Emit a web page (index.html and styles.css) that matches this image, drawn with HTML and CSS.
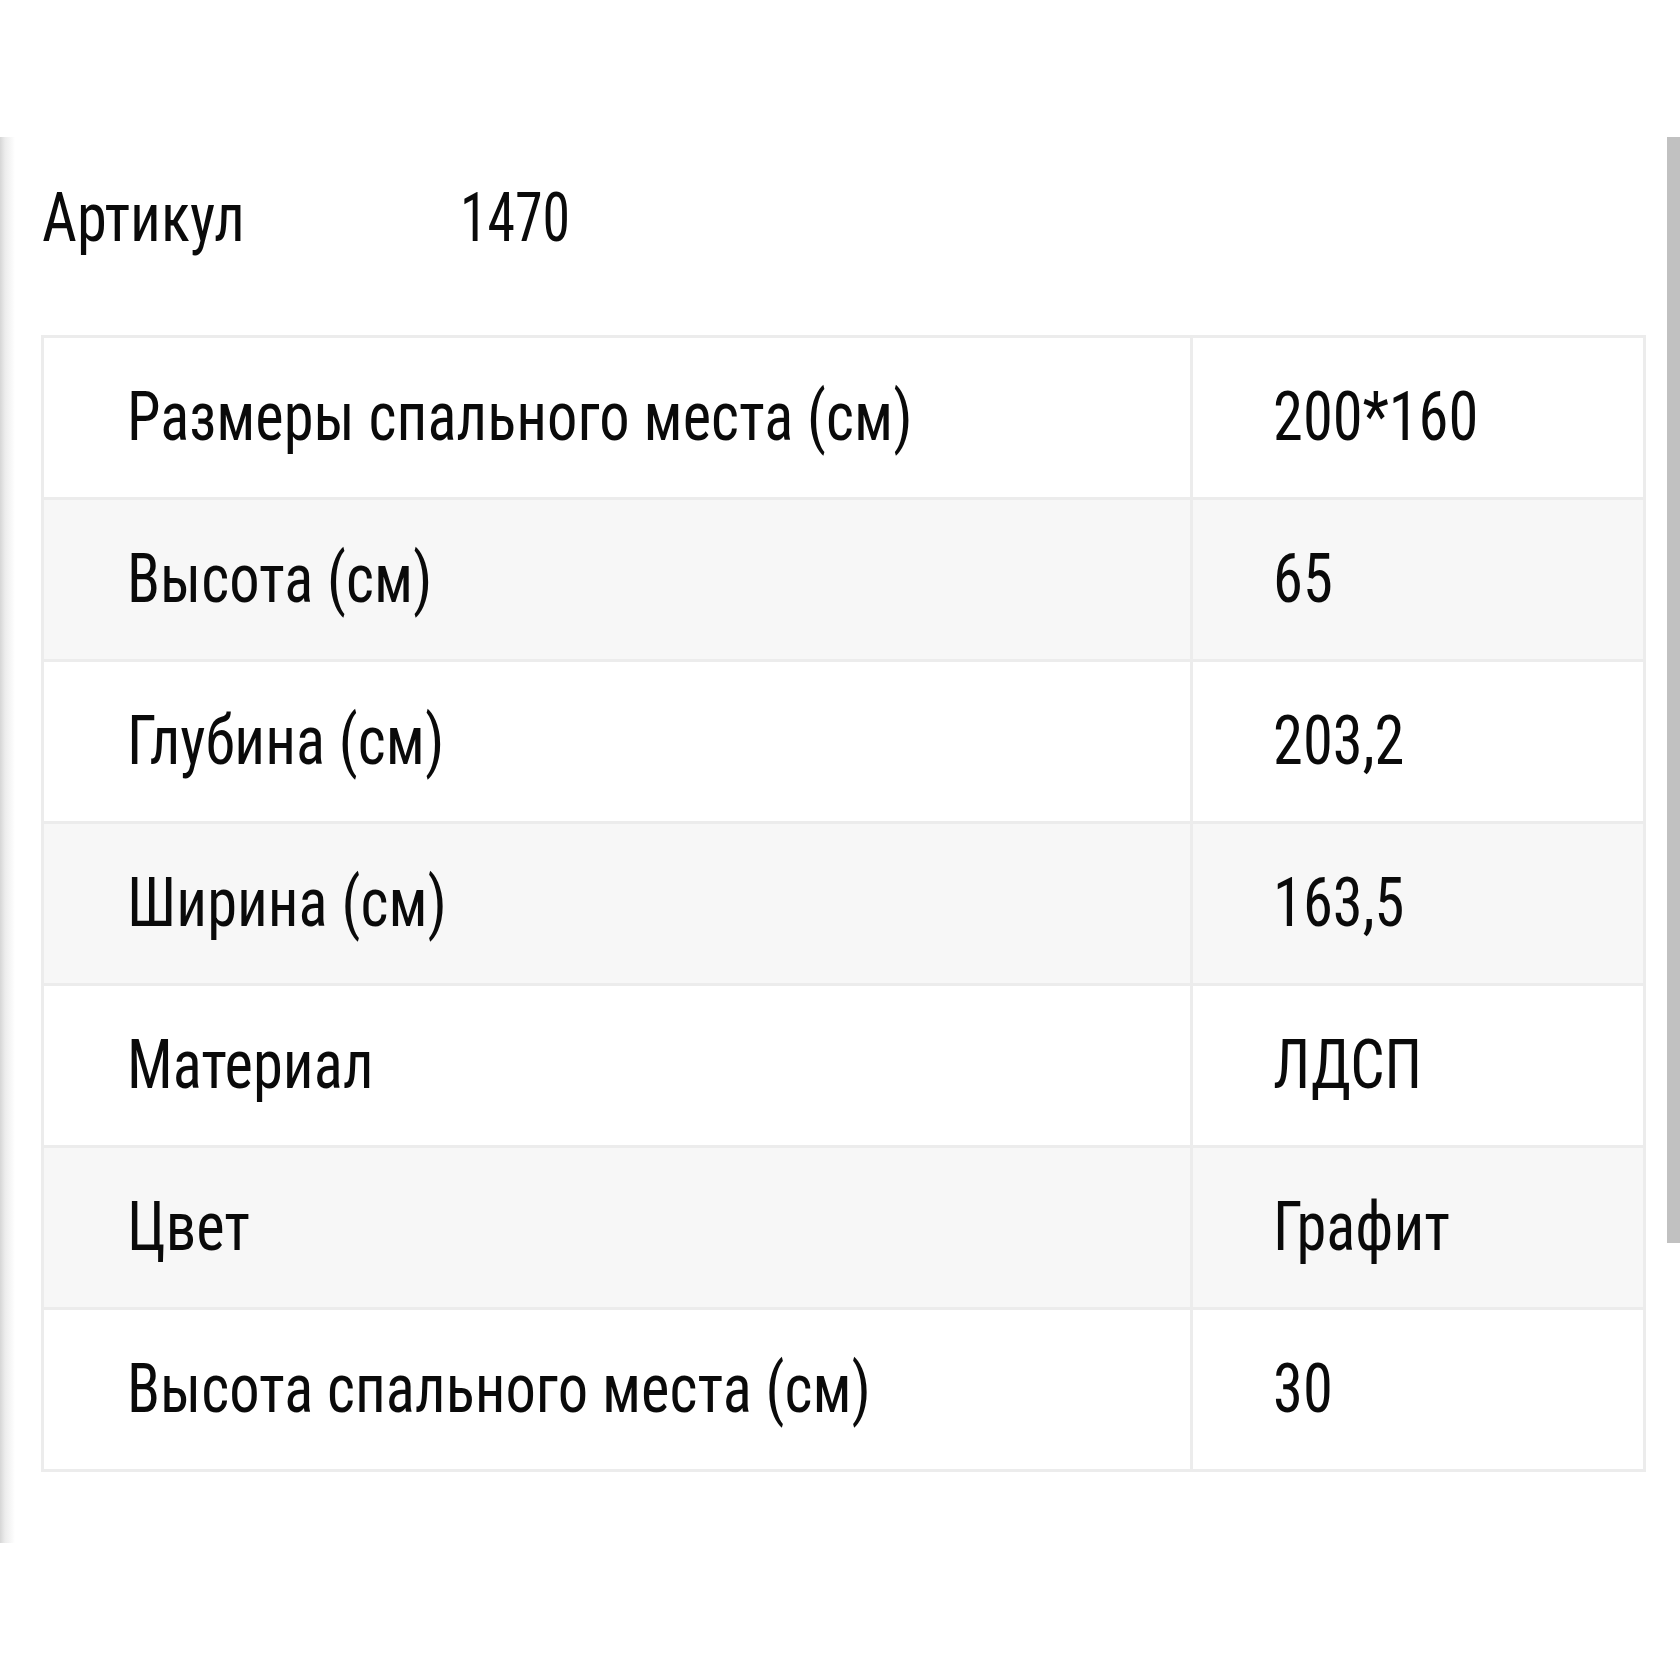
FILE: index.html
```html
<!DOCTYPE html>
<html lang="ru">
<head>
<meta charset="utf-8">
<title>Характеристики</title>
<link rel="stylesheet" href="styles.css">
</head>
<body>
<div class="page">
  <div class="sheet">
    <div class="sku">
      <span class="sku-label"><span class="t">Артикул</span></span>
      <span class="sku-value"><span class="t t-num">1470</span></span>
    </div>
    <table class="specs">
      <colgroup><col class="c-name"><col class="c-val"></colgroup>
      <tbody>
        <tr><td><span class="t">Размеры спального места (см)</span></td><td><span class="t">200*160</span></td></tr>
        <tr><td><span class="t">Высота (см)</span></td><td><span class="t">65</span></td></tr>
        <tr><td><span class="t">Глубина (см)</span></td><td><span class="t">203,2</span></td></tr>
        <tr><td><span class="t">Ширина (см)</span></td><td><span class="t">163,5</span></td></tr>
        <tr><td><span class="t">Материал</span></td><td><span class="t">ЛДСП</span></td></tr>
        <tr><td><span class="t">Цвет</span></td><td><span class="t">Графит</span></td></tr>
        <tr><td><span class="t">Высота спального места (см)</span></td><td><span class="t">30</span></td></tr>
      </tbody>
    </table>
    <div class="scrollbar"></div>
  </div>
</div>
</body>
</html>
```
FILE: styles.css
```css
html, body {
  margin: 0;
  padding: 0;
  background: #ffffff;
}
body {
  font-family: "Roboto Condensed", "Liberation Sans Narrow", "DejaVu Sans Condensed", "DejaVu Sans", sans-serif;
  font-stretch: condensed;
  color: #0a0a0a;
}
.t {
  display: inline-block;
  transform: scaleX(0.89);
  transform-origin: left center;
}
.t-num {
  transform: scaleX(0.82);
}
.page {
  padding-top: 137px;
  height: 1543px;
  box-sizing: border-box;
}
.sheet {
  position: relative;
  padding: 42px 0 71px 41px;
  width: 1643px;
  background: linear-gradient(to right, #d6d6d6 0, #ececec 5px, #ffffff 15px) no-repeat;
  background-size: 16px 100%;
}
.sku {
  display: flex;
  align-items: baseline;
  font-size: 68px;
  line-height: 78px;
  padding-left: 1px;
}
.sku-label {
  width: 418px;
}
.specs {
  margin-top: 78px;
  border-collapse: collapse;
  table-layout: fixed;
  width: 1602px;
  border: 3px solid #ececec;
  font-size: 68px;
  line-height: 79px;
}
.c-name { width: 1149px; }
.c-val { width: 453px; }
.specs td {
  border: 3px solid #ececec;
  padding: 40px 20px 40px 83px;
  vertical-align: middle;
  white-space: nowrap;
}
.specs td + td {
  padding-left: 80px;
}
.specs tr:nth-child(even) td {
  background: #f7f7f7;
}
.scrollbar {
  position: absolute;
  top: 0;
  left: 1667px;
  width: 13px;
  height: 1106px;
  background: #c1c1c1;
}
```
